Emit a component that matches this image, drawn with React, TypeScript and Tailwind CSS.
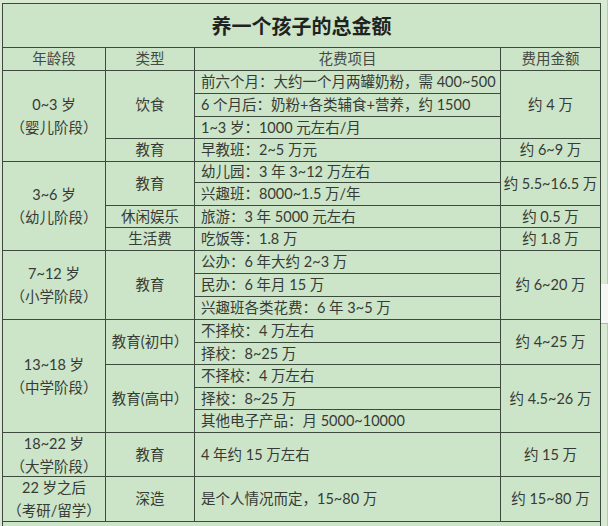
import React from "react";

type Span = { t: string; span: number };
type Section = {
  age: [string, string];
  types: Span[];
  items: string[];
  amounts: Span[];
};

const sections: Section[] = [
  {
    age: ["0~3 岁", "（婴儿阶段）"],
    types: [
      { t: "饮食", span: 3 },
      { t: "教育", span: 1 },
    ],
    items: [
      "前六个月：大约一个月两罐奶粉，需 400~500",
      "6 个月后：奶粉+各类辅食+营养，约 1500",
      "1~3 岁：1000 元左右/月",
      "早教班：2~5 万元",
    ],
    amounts: [
      { t: "约 4 万", span: 3 },
      { t: "约 6~9 万", span: 1 },
    ],
  },
  {
    age: ["3~6 岁", "（幼儿阶段）"],
    types: [
      { t: "教育", span: 2 },
      { t: "休闲娱乐", span: 1 },
      { t: "生活费", span: 1 },
    ],
    items: [
      "幼儿园：3 年 3~12 万左右",
      "兴趣班：8000~1.5 万/年",
      "旅游：3 年 5000 元左右",
      "吃饭等：1.8 万",
    ],
    amounts: [
      { t: "约 5.5~16.5 万", span: 2 },
      { t: "约 0.5 万", span: 1 },
      { t: "约 1.8 万", span: 1 },
    ],
  },
  {
    age: ["7~12 岁", "（小学阶段）"],
    types: [{ t: "教育", span: 3 }],
    items: ["公办：6 年大约 2~3 万", "民办：6 年月 15 万", "兴趣班各类花费：6 年 3~5 万"],
    amounts: [{ t: "约 6~20 万", span: 3 }],
  },
  {
    age: ["13~18 岁", "（中学阶段）"],
    types: [
      { t: "教育(初中）", span: 2 },
      { t: "教育(高中）", span: 3 },
    ],
    items: [
      "不择校：4 万左右",
      "择校：8~25 万",
      "不择校：4 万左右",
      "择校：8~25 万",
      "其他电子产品：月 5000~10000",
    ],
    amounts: [
      { t: "约 4~25 万", span: 2 },
      { t: "约 4.5~26 万", span: 3 },
    ],
  },
  {
    age: ["18~22 岁", "（大学阶段）"],
    types: [{ t: "教育", span: 1 }],
    items: ["4 年约 15 万左右"],
    amounts: [{ t: "约 15 万", span: 1 }],
  },
  {
    age: ["22 岁之后", "（考研/留学）"],
    types: [{ t: "深造", span: 1 }],
    items: ["是个人情况而定，15~80 万"],
    amounts: [{ t: "约 15~80 万", span: 1 }],
  },
];

const spanCls: Record<number, string> = {
  1: "row-span-1",
  2: "row-span-2",
  3: "row-span-3",
  4: "row-span-4",
  5: "row-span-5",
};

const cell = "border-r border-b border-[#3f4a3f] flex items-center";

function buildCells() {
  const out: React.ReactNode[] = [];
  let k = 0;
  for (const s of sections) {
    const n = s.items.length;
    const typeStarts = new Map<number, Span>();
    let acc = 0;
    for (const t of s.types) {
      typeStarts.set(acc, t);
      acc += t.span;
    }
    const amtStarts = new Map<number, Span>();
    acc = 0;
    for (const a of s.amounts) {
      amtStarts.set(acc, a);
      acc += a.span;
    }
    for (let r = 0; r < n; r++) {
      if (r === 0) {
        out.push(
          <div
            key={k++}
            className={`${cell} col-start-1 ${spanCls[n]} flex-col justify-center text-center leading-[23px]`}
          >
            <div>{s.age[0]}</div>
            <div>{s.age[1]}</div>
          </div>
        );
      }
      const t = typeStarts.get(r);
      if (t) {
        out.push(
          <div key={k++} className={`${cell} col-start-2 ${spanCls[t.span]} justify-center`}>
            {t.t}
          </div>
        );
      }
      out.push(
        <div key={k++} className={`${cell} col-start-3 row-span-1 pl-[6px] whitespace-nowrap`}>
          {s.items[r]}
        </div>
      );
      const a = amtStarts.get(r);
      if (a) {
        out.push(
          <div key={k++} className={`${cell} col-start-4 ${spanCls[a.span]} justify-center whitespace-nowrap`}>
            {a.t}
          </div>
        );
      }
    }
  }
  return out;
}

export default function App() {
  return (
    <div className="w-[608px] h-[526px] overflow-hidden bg-[#d8e9d4] flex font-['Lato','Noto_Sans_CJK_SC',sans-serif] text-[14.5px] text-[#363b36]">
      <div className="pl-[2px] pt-[3px]">
        <div className="grid grid-cols-[103px_89px_306px_100px] grid-rows-[44px_23px_23px_23px_22px_23px_21px_23px_22px_23px_23px_23px_23px_23px_22px_23px_22px_23px_44px_45px_30px] border-l border-t border-[#3f4a3f] bg-[#cce4c8]">
          <div className={`${cell} col-span-4 justify-center font-bold text-[20px] text-[#1f231f] tracking-[0px]`}>
            养一个孩子的总金额
          </div>
          <div className={`${cell} justify-center text-[#454a45]`}>年龄段</div>
          <div className={`${cell} justify-center text-[#454a45]`}>类型</div>
          <div className={`${cell} justify-center text-[#454a45]`}>花费项目</div>
          <div className={`${cell} justify-center text-[#454a45]`}>费用金额</div>
          {buildCells()}
          <div className={`${cell} col-span-4`} />
        </div>
      </div>
      <div className="flex-1 flex flex-col">
        <div className="h-[284px] border-r border-[#b9c8b6]" />
        <div className="h-[40px] bg-[#f4f7f3] border-b border-[#b0b8ae]" />
        <div className="flex-1 border-r border-[#b9c8b6]" />
      </div>
    </div>
  );
}
